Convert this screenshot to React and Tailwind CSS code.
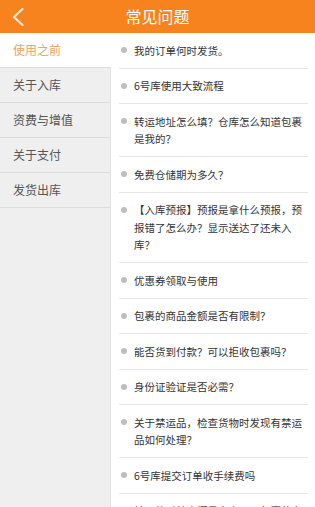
import React, { useState } from 'react';

const categories = ['使用之前', '关于入库', '资费与增值', '关于支付', '发货出库'];

const questions = [
  '我的订单何时发货。',
  '6号库使用大致流程',
  '转运地址怎么填？仓库怎么知道包裹是我的？',
  '免费仓储期为多久？',
  '【入库预报】预报是拿什么预报，预报错了怎么办？显示送达了还未入库？',
  '优惠券领取与使用',
  '包裹的商品金额是否有限制？',
  '能否货到付款？可以拒收包裹吗？',
  '身份证验证是否必需？',
  '关于禁运品，检查货物时发现有禁运品如何处理？',
  '6号库提交订单收手续费吗',
  '转运的时效大概是多少天？包裹什么时候到？',
];

const App = () => {
  const [active, setActive] = useState(0);

  return (
    <div
      className="w-[315px] h-[507px] overflow-hidden bg-white flex flex-col"
      style={{ fontFamily: '"Noto Sans CJK SC", "Noto Sans", sans-serif' }}
    >
      {/* 顶部导航 */}
      <div className="h-[33px] shrink-0 bg-[#f7831e] flex items-center relative">
        <button className="w-[36px] h-full flex items-center justify-center">
          <svg width="14" height="20" viewBox="0 0 14 20" fill="none">
            <path d="M11.5 2 L3 10 L11.5 18" stroke="#fbe6cf" strokeWidth="2.4" strokeLinecap="round" strokeLinejoin="round" />
          </svg>
        </button>
        <h1 className="absolute left-0 right-0 text-center text-[16px] text-white pointer-events-none leading-[33px]">常见问题</h1>
      </div>

      <div className="flex flex-1 min-h-0">
        {/* 左侧分类 */}
        <div className="w-[111px] shrink-0 bg-[#efefef] border-r border-[#e2e2e2]">
          {categories.map((c, i) => (
            <div
              key={c}
              onClick={() => setActive(i)}
              className={`h-[35px] flex items-center pl-[13px] text-[12px] border-b border-[#dcdcdc] cursor-pointer ${
                active === i ? 'bg-white text-[#eea35a] -mr-px' : 'text-[#555]'
              }`}
            >
              {c}
            </div>
          ))}
        </div>

        {/* 右侧问题列表 */}
        <div className="flex-1 pl-[8px] pr-[7px]">
          {questions.map((q) => (
            <div key={q} className="flex border-b border-[#e6e6e6] py-[8.5px]">
              <div className="w-[15px] shrink-0 h-[17.5px] flex items-center pl-[2px]">
                <span className="w-[6px] h-[6px] rounded-full bg-[#bdbdbd]" />
              </div>
              <p className="flex-1 text-[10.5px] leading-[17.5px] text-[#333]">{q}</p>
            </div>
          ))}
        </div>
      </div>
    </div>
  );
};

export default App;
